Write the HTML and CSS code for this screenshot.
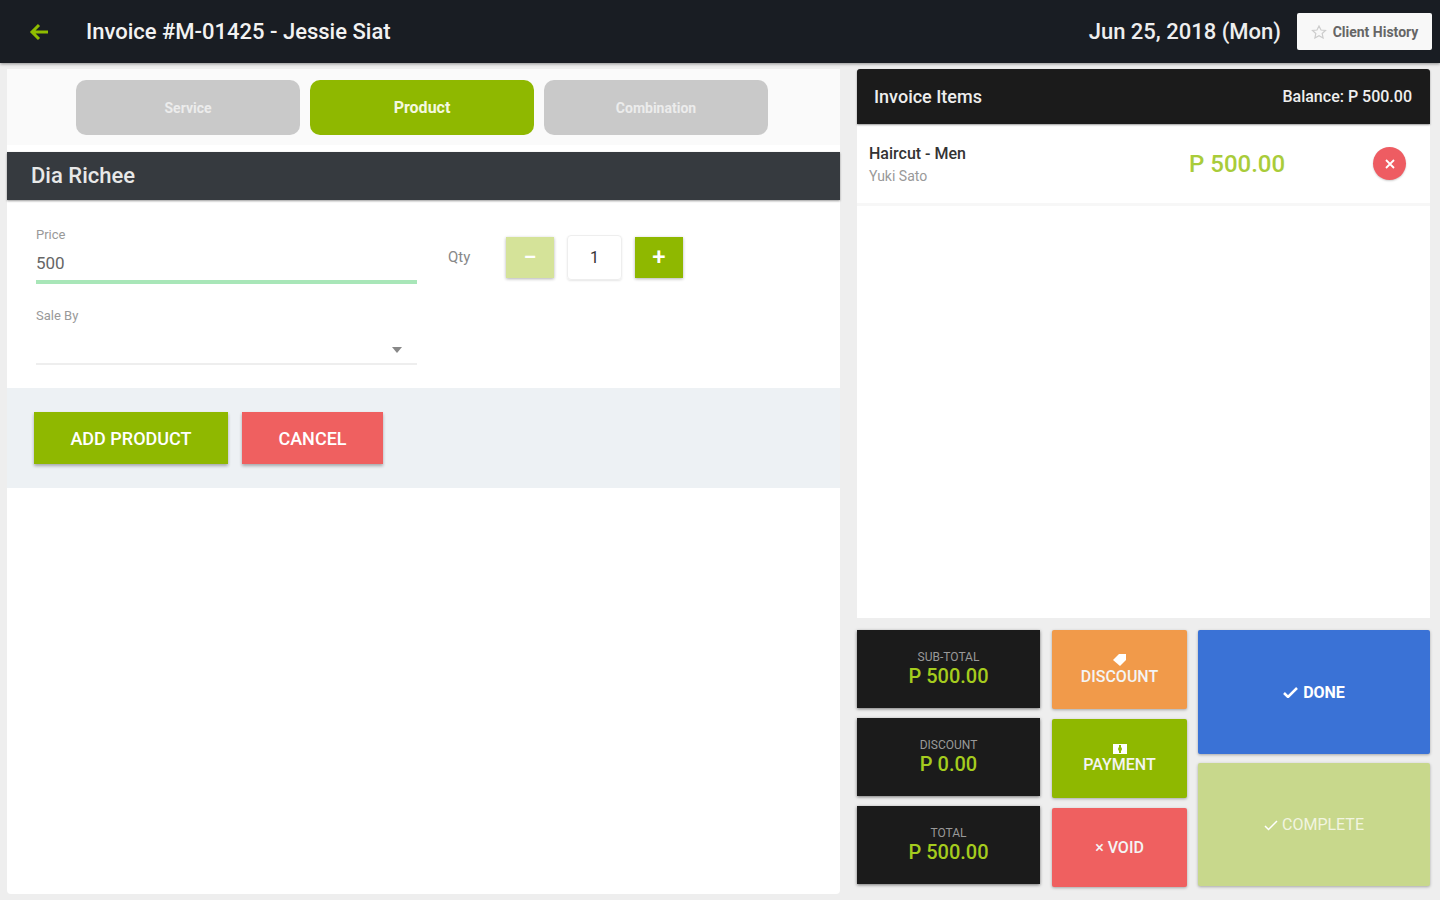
FILE: index.html
```html
<!DOCTYPE html>
<html lang="en">
<head>
  <meta charset="UTF-8">
  <meta name="viewport" content="width=device-width, initial-scale=1.0">
  <title>Invoice #M-01425</title>
  <link rel="stylesheet" href="styles.css">
</head>
<body>
  <header class="topbar">
    <svg class="back" width="22" height="20" viewBox="0 0 22 20"><path d="M20 10H4M11 3l-7 7 7 7" fill="none" stroke="#8fbc00" stroke-width="3"/></svg>
    <div class="title">Invoice #M-01425 - Jessie Siat</div>
    <div class="date">Jun 25, 2018 (Mon)</div>
    <button class="history">
      <svg width="16" height="14" viewBox="0 0 16 14"><path d="M8 1l2 4 4.500.5-3.300 3 .9 4.500L8 10.800 3.900 13l.9-4.500-3.300-3L6 5z" fill="none" stroke="#ccc" stroke-width="1.200"/></svg>
      Client History
    </button>
  </header>

  <main class="layout">
    <!-- left side -->
    <section class="left">
      <div class="tabs">
        <div class="tab">Service</div>
        <div class="tab active">Product</div>
        <div class="tab">Combination</div>
      </div>
      <div class="item-head">Dia Richee</div>
      <div class="form">
        <div class="fields">
          <div class="field">
            <label>Price</label>
            <div class="value">500</div>
          </div>
          <div class="field sale">
            <label>Sale By</label>
            <div class="select"><span class="caret"></span></div>
          </div>
        </div>
        <div class="qty">
          <span class="qty-label">Qty</span>
          <div class="step minus">&minus;</div>
          <div class="qty-num">1</div>
          <div class="step plus">+</div>
        </div>
      </div>
      <div class="actions">
        <button class="btn add">ADD PRODUCT</button>
        <button class="btn cancel">CANCEL</button>
      </div>
    </section>

    <!-- right side -->
    <section class="right">
      <div class="invoice">
        <div class="invoice-head">
          <span class="invoice-title">Invoice Items</span>
          <span class="balance">Balance: P 500.00</span>
        </div>
        <div class="line">
          <div class="line-info">
            <div class="line-name">Haircut - Men</div>
            <div class="line-staff">Yuki Sato</div>
          </div>
          <div class="line-price">P 500.00</div>
          <div class="remove">
            <svg width="12" height="12" viewBox="0 0 12 12"><path d="M2 2l8 8M10 2l-8 8" stroke="#fff" stroke-width="1.800"/></svg>
          </div>
        </div>
      </div>

      <div class="pad">
        <div class="totals">
          <div class="total"><span class="total-label">SUB-TOTAL</span><span class="total-value">P 500.00</span></div>
          <div class="total"><span class="total-label">DISCOUNT</span><span class="total-value">P 0.00</span></div>
          <div class="total"><span class="total-label">TOTAL</span><span class="total-value">P 500.00</span></div>
        </div>
        <div class="ops">
          <div class="op orange">
            <svg width="16" height="14" viewBox="0 0 16 14"><path d="M1 7l6-6h7v6l-6 6z" fill="#fff"/></svg>
            DISCOUNT
          </div>
          <div class="op green">
            <svg width="16" height="12" viewBox="0 0 16 12"><path d="M1 1h14v10H1z" fill="#fff"/><path d="M8 2v8" stroke="#8fb800" stroke-width="2"/><circle cx="8" cy="6" r="2" fill="#8fb800"/></svg>
            PAYMENT
          </div>
          <div class="op red">&times; VOID</div>
        </div>
        <div class="finish">
          <div class="fin done">
            <svg width="16" height="12" viewBox="0 0 16 12"><path d="M1 7l4 4 9-9" fill="none" stroke="#fff" stroke-width="2.500"/></svg>
            DONE
          </div>
          <div class="fin complete">
            <svg width="14" height="12" viewBox="0 0 14 12"><path d="M1 7l3.500 3.500L13 2" fill="none" stroke="#fff" stroke-width="1.500"/></svg>
            COMPLETE
          </div>
        </div>
      </div>
    </section>
  </main>
</body>
</html>
```

FILE: styles.css
```css
* {
  box-sizing: border-box;
}
html, body {
  height: 100%;
}
body {
  margin: 0;
  font-family: Roboto, "Liberation Sans", sans-serif;
  background-color: #eeeeee;
  overflow: hidden;
}
button {
  font-family: inherit;
  border: none;
}

/* top bar */
.topbar {
  height: 63px;
  background-color: #191d23;
  display: flex;
  align-items: center;
  padding: 0 8px 0 28px;
  color: #fff;
  box-shadow: 0 1px 3px rgba(0, 0, 0, 0.4);
}
.back {
  margin-right: 36px;
}
.title {
  font-size: 22px;
  font-weight: 500;
  color: #f2f2f2;
  flex: 1;
}
.date {
  font-size: 22px;
  font-weight: 500;
  color: #eee;
  margin-right: 16px;
}
.history {
  width: 135px;
  height: 37px;
  background-color: #f8f8f8;
  color: #666;
  font-size: 14px;
  font-weight: 700;
  border-radius: 2px;
  display: flex;
  align-items: center;
  justify-content: center;
  gap: 6px;
  padding: 0;
}

.layout {
  display: flex;
  height: 837px;
}

/* left side */
.left {
  width: 833px;
  margin: 6px 0 0 7px;
  height: 825px;
  background-color: #fff;
  border-radius: 4px;
}
.tabs {
  height: 76px;
  background-color: #fafafa;
  padding: 11px 0 0 69px;
  display: flex;
  gap: 10px;
}
.tab {
  width: 224px;
  height: 55px;
  border-radius: 10px;
  background-color: #c9c9c9;
  color: #ececec;
  font-size: 14px;
  font-weight: 700;
  display: flex;
  align-items: center;
  justify-content: center;
}
.tab.active {
  background-color: #8fb800;
  color: #f4f8e0;
  font-size: 16px;
}
.item-head {
  height: 48px;
  margin-top: 7px;
  background-color: #363a3f;
  color: #e8e8e8;
  font-size: 22px;
  font-weight: 500;
  line-height: 48px;
  padding-left: 24px;
  box-shadow: 0 1px 2px rgba(0, 0, 0, 0.4);
}
.form {
  height: 188px;
  padding: 27px 0 0 29px;
  display: flex;
}
.fields {
  width: 381px;
}
.field label {
  display: block;
  font-size: 13px;
  color: #999;
  height: 16px;
  line-height: 16px;
}
.value {
  margin-top: 9px;
  height: 32px;
  font-size: 17px;
  color: #666;
  line-height: 22px;
  border-bottom: 4px solid #a8e6b8;
}
.sale {
  margin-top: 24px;
}
.select {
  margin-top: 8px;
  height: 33px;
  border-bottom: 2px solid #eee;
  position: relative;
}
.caret {
  position: absolute;
  right: 15px;
  top: 15px;
  border: 5px solid transparent;
  border-top: 6px solid #888;
  border-bottom: 0;
}
.qty {
  display: flex;
  align-items: center;
  height: 44px;
  margin-left: 31px;
  margin-top: 8px;
}
.qty-label {
  font-size: 15px;
  color: #888;
  width: 58px;
}
.step {
  width: 48px;
  height: 41px;
  display: flex;
  align-items: center;
  justify-content: center;
  color: #fff;
  font-size: 24px;
  font-weight: 500;
  box-shadow: 0 1px 3px rgba(0, 0, 0, 0.3);
}
.minus {
  background-color: #d5e399;
}
.plus {
  background-color: #8fb800;
}
.qty-num {
  width: 55px;
  height: 45px;
  margin: 0 13px;
  border-radius: 4px;
  border: 1px solid #eee;
  box-shadow: 0 1px 2px rgba(0, 0, 0, 0.1);
  display: flex;
  align-items: center;
  justify-content: center;
  font-size: 16px;
  color: #333;
}
.actions {
  height: 100px;
  background-color: #edf1f4;
  padding: 24px 0 0 27px;
  display: flex;
  gap: 14px;
}
.btn {
  height: 52px;
  color: #fff;
  font-size: 18px;
  font-weight: 500;
  padding: 0;
  box-shadow: 0 2px 3px rgba(0, 0, 0, 0.3);
}
.add {
  width: 194px;
  background-color: #8fb800;
}
.cancel {
  width: 141px;
  background-color: #ef6060;
}

/* right side */
.right {
  width: 573px;
  margin: 6px 0 0 17px;
}
.invoice {
  height: 549px;
  background-color: #fff;
}
.invoice-head {
  height: 55px;
  background-color: #1b1b1b;
  border-radius: 3px 3px 0 0;
  color: #eee;
  display: flex;
  align-items: center;
  justify-content: space-between;
  padding: 0 18px 0 17px;
  box-shadow: 0 1px 2px rgba(0, 0, 0, 0.4);
}
.invoice-title {
  font-size: 18px;
  font-weight: 500;
}
.balance {
  font-size: 16px;
  font-weight: 500;
}
.line {
  height: 82px;
  display: flex;
  align-items: center;
  padding: 0 24px 0 12px;
  border-bottom: 3px solid #f7f7f7;
}
.line-info {
  width: 320px;
}
.line-name {
  font-size: 16px;
  color: #333;
  font-weight: 500;
}
.line-staff {
  font-size: 14px;
  color: #999;
  margin-top: 5px;
}
.line-price {
  flex: 1;
  font-size: 24px;
  color: #a9cc3a;
  font-weight: 500;
}
.remove {
  width: 33px;
  height: 33px;
  border-radius: 50%;
  background-color: #ee5c62;
  display: flex;
  align-items: center;
  justify-content: center;
  box-shadow: 0 1px 2px rgba(0, 0, 0, 0.2);
}
.pad {
  display: flex;
  margin-top: 12px;
}
.totals {
  width: 183px;
  display: flex;
  flex-direction: column;
  gap: 10px;
}
.total {
  height: 78px;
  background-color: #1b1b1b;
  display: flex;
  flex-direction: column;
  align-items: center;
  justify-content: center;
  box-shadow: 0 1px 3px rgba(0, 0, 0, 0.5);
}
.total-label {
  font-size: 12px;
  color: #999;
}
.total-value {
  font-size: 20px;
  font-weight: 500;
  color: #a5cc1e;
}
.ops {
  width: 135px;
  margin-left: 12px;
  display: flex;
  flex-direction: column;
  gap: 10px;
}
.op {
  height: 79px;
  color: #f4f4f4;
  font-size: 16px;
  font-weight: 500;
  display: flex;
  flex-direction: column;
  align-items: center;
  justify-content: center;
  border-radius: 2px;
  box-shadow: 0 1px 3px rgba(0, 0, 0, 0.3);
}
.orange {
  background-color: #f19a4a;
}
.green {
  background-color: #8fb800;
}
.red {
  background-color: #ef6060;
}
.finish {
  width: 232px;
  margin-left: 11px;
  display: flex;
  flex-direction: column;
  gap: 9px;
}
.fin {
  color: #fff;
  font-size: 16px;
  display: flex;
  align-items: center;
  justify-content: center;
  gap: 4px;
  border-radius: 2px;
  box-shadow: 0 1px 3px rgba(0, 0, 0, 0.3);
}
.done {
  height: 124px;
  background-color: #3a72d6;
  font-weight: 700;
}
.complete {
  height: 123px;
  background-color: #c8d88c;
  color: #f2f5e0;
}
```
